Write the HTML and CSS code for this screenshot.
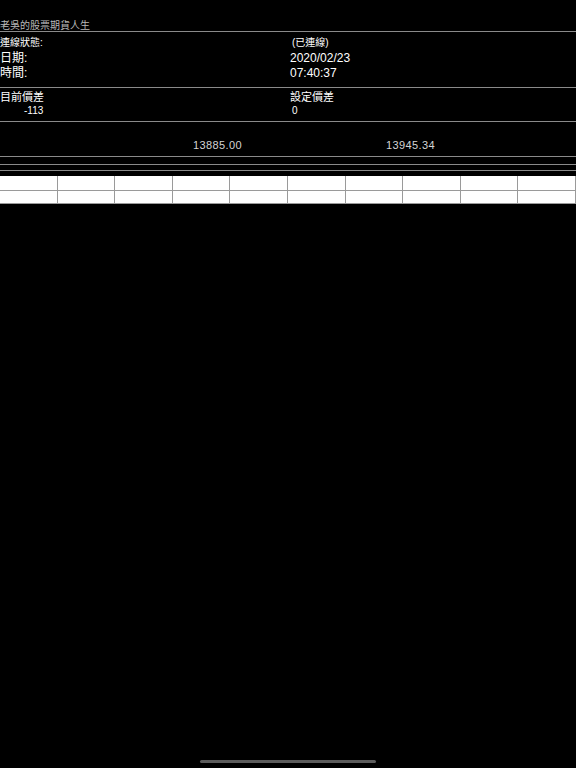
FILE: index.html
```html
<!DOCTYPE html>
<html lang="zh-Hant">
<head>
<meta charset="utf-8">
<title>老吳的股票期貨人生</title>
<link rel="stylesheet" href="styles.css">
</head>
<body>
<div class="screen">
  <header class="title">老吳的股票期貨人生</header>
  <section class="info">
    <div class="row small"><span>連線狀態:</span><span class="rv">(已連線)</span></div>
    <div class="row"><span>日期:</span><span>2020/02/23</span></div>
    <div class="row"><span>時間:</span><span>07:40:37</span></div>
  </section>
  <section class="price">
    <div class="row label"><span>目前價差</span><span>設定價差</span></div>
    <div class="row val"><span class="neg">-113</span><span class="rv">0</span></div>
  </section>
  <section class="nums">
    <span></span><span>13885.00</span><span>13945.34</span>
  </section>
  <div class="rule r1"></div>
  <div class="rule r2"></div>
  <div class="grid">
    <div class="gr"><i></i><i></i><i></i><i></i><i></i><i></i><i></i><i></i><i></i><i></i></div>
    <div class="gr second"><i></i><i></i><i></i><i></i><i></i><i></i><i></i><i></i><i></i><i></i></div>
  </div>
  <div class="home"></div>
</div>
</body>
</html>
```

FILE: styles.css
```css
html, body {
  margin: 0;
  padding: 0;
  background: #000;
}
.screen {
  width: 576px;
  height: 768px;
  background: #000;
  color: #fff;
  font-family: "Liberation Sans", "Noto Sans CJK TC", sans-serif;
  position: relative;
  overflow: hidden;
}
.title {
  height: 32px;
  box-sizing: border-box;
  padding-top: 19px;
  font-size: 10px;
  line-height: 13px;
  color: #b8b8b8;
  border-bottom: 1px solid #8a8a8a;
}
.row {
  display: grid;
  grid-template-columns: 290px 1fr;
}
.info {
  height: 56px;
  box-sizing: border-box;
  padding-top: 3px;
  border-bottom: 1px solid #8a8a8a;
}
.info .row {
  height: 15px;
  line-height: 15px;
  font-size: 12px;
}
.info .row.small {
  height: 16px;
  line-height: 16px;
  font-size: 10px;
}
.rv {
  padding-left: 2px;
}
.price {
  height: 34px;
  box-sizing: border-box;
  padding-top: 2px;
  border-bottom: 1px solid #8a8a8a;
}
.price .row {
  height: 14px;
  line-height: 14px;
}
.price .label {
  font-size: 11px;
}
.price .val {
  font-size: 10px;
}
.neg {
  padding-left: 24px;
}
.nums {
  display: grid;
  grid-template-columns: 193px 193px 1fr;
  height: 35px;
  box-sizing: border-box;
  padding-top: 16px;
  font-size: 11px;
  line-height: 14px;
  letter-spacing: 0.4px;
  color: #d4d4d4;
  font-family: "Liberation Sans", sans-serif;
  border-bottom: 1px solid #8a8a8a;
}
.rule {
  height: 7px;
  border-bottom: 1px solid #8a8a8a;
}
.rule.r2 {
  height: 5px;
}
.grid {
  margin-top: 5px;
}
.gr {
  display: flex;
  height: 15px;
}
.gr.second {
  height: 13px;
}
.gr i {
  flex: 1;
  background: #fff;
  border-right: 1px solid #9a9a9a;
  border-bottom: 1px solid #9a9a9a;
}
.home {
  position: absolute;
  left: 200px;
  top: 760px;
  width: 176px;
  height: 3px;
  border-radius: 2px;
  background: #5c5c5c;
}
```
